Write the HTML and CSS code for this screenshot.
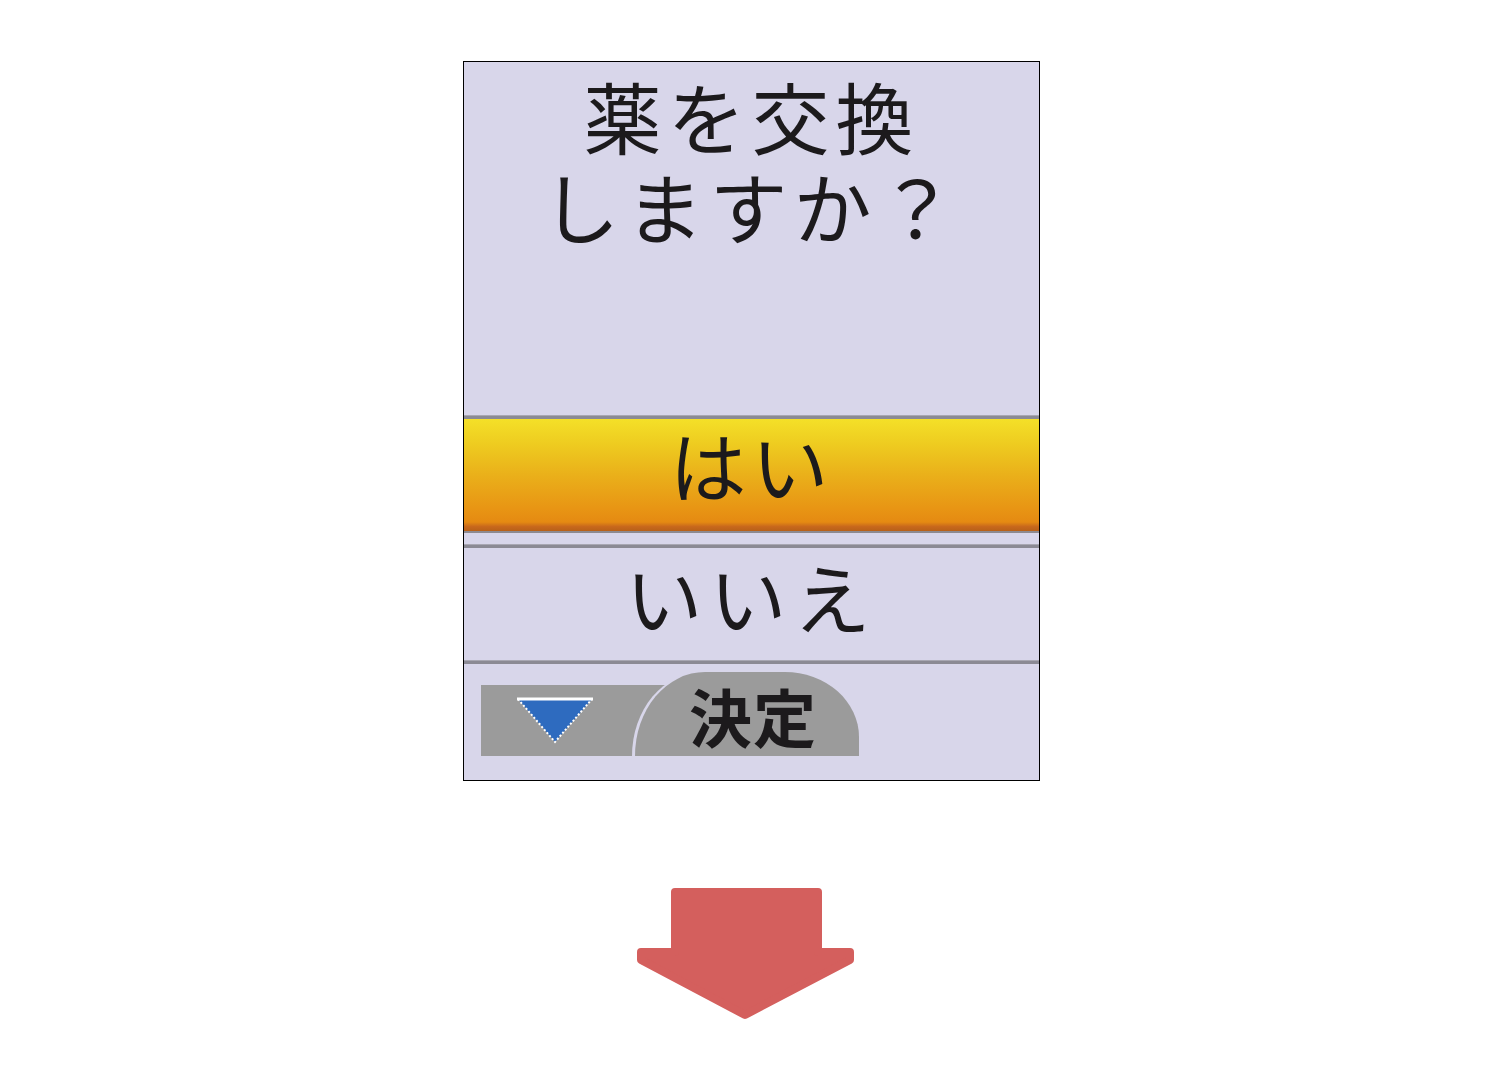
FILE: index.html
```html
<!DOCTYPE html>
<html lang="ja">
<head>
<meta charset="utf-8">
<link rel="stylesheet" href="styles.css">
</head>
<body>

<div class="screen">
	<div class="message">薬を交換<br>しますか？</div>
	<div class="rule"></div>
	<div class="item yes">はい</div>
	<div class="rule thin"></div>
	<div class="gap"></div>
	<div class="rule"></div>
	<div class="item no">いいえ</div>
	<div class="rule"></div>
	<div class="keys">
		<div class="key down">
			<svg width="78" height="48" viewBox="0 0 78 48">
				<polygon points="2,2 76,2 39,45" fill="#2e6bbf"/>
				<polyline points="2,2 39,45 76,2" fill="none" stroke="#fff" stroke-width="2" stroke-dasharray="2 2"/>
				<line x1="1" y1="2" x2="77" y2="2" stroke="#fff" stroke-width="3"/>
			</svg>
		</div>
		<div class="key ok">決定</div>
	</div>
</div>

<div class="arrow">
	<svg width="220" height="134" viewBox="0 0 220 134">
		<polygon points="38,4 181,4 181,64 213,64 213,72 108,127 4,72 4,64 38,64" fill="#d45f5d" stroke="#d45f5d" stroke-width="8" stroke-linejoin="round"/>
	</svg>
</div>

</body>
</html>
```
FILE: styles.css
```css
body { margin:0; background:#fff; font-family:"Noto Sans CJK JP", "Noto Sans", sans-serif; color:#1c1a1c; }

.screen { width:575px; margin:61px 0 0 463px; border:1px solid #000; background:#d8d6ea; display:flex; flex-direction:column; }

.message { height:353px; box-sizing:border-box; padding-top:8px; text-align:center; font-size:78px; line-height:90px; letter-spacing:6px; }

.rule { height:3px; background:#8b8a94; border-top:1px solid #a8a7b2; }
.rule.thin { height:2px; border-top:0; background:#8d8a90; }
.gap { height:11px; }

.item { height:112px; display:flex; align-items:center; justify-content:center; font-size:77px; letter-spacing:5px; box-sizing:border-box; }
.yes { background:linear-gradient(#f4e028 0%, #eecc20 22%, #eab01a 50%, #e89514 80%, #e58a12 92%, #c8681c 96%, #b86018 100%); padding-bottom:24px; }
.no { padding-bottom:18px; letter-spacing:7px; }

.keys { height:116px; display:flex; align-items:flex-end; padding:0 0 24px 17px; box-sizing:border-box; }
.key { background:#9b9b9b; }
.down { width:190px; height:71px; box-sizing:border-box; padding:12px 0 0 35px; }
.down svg { display:block; }
.ok { width:224px; height:84px; margin-left:-36px; border-radius:70px 74px 0 0 / 84px 65px 0 0; box-shadow:-3px 0 0 #d8d6ea; text-align:center; font-size:63px; font-weight:bold; line-height:86px; padding-left:12px; box-sizing:border-box; letter-spacing:1px; }

.arrow { margin:107px 0 0 637px; }
.arrow svg { display:block; }
```
